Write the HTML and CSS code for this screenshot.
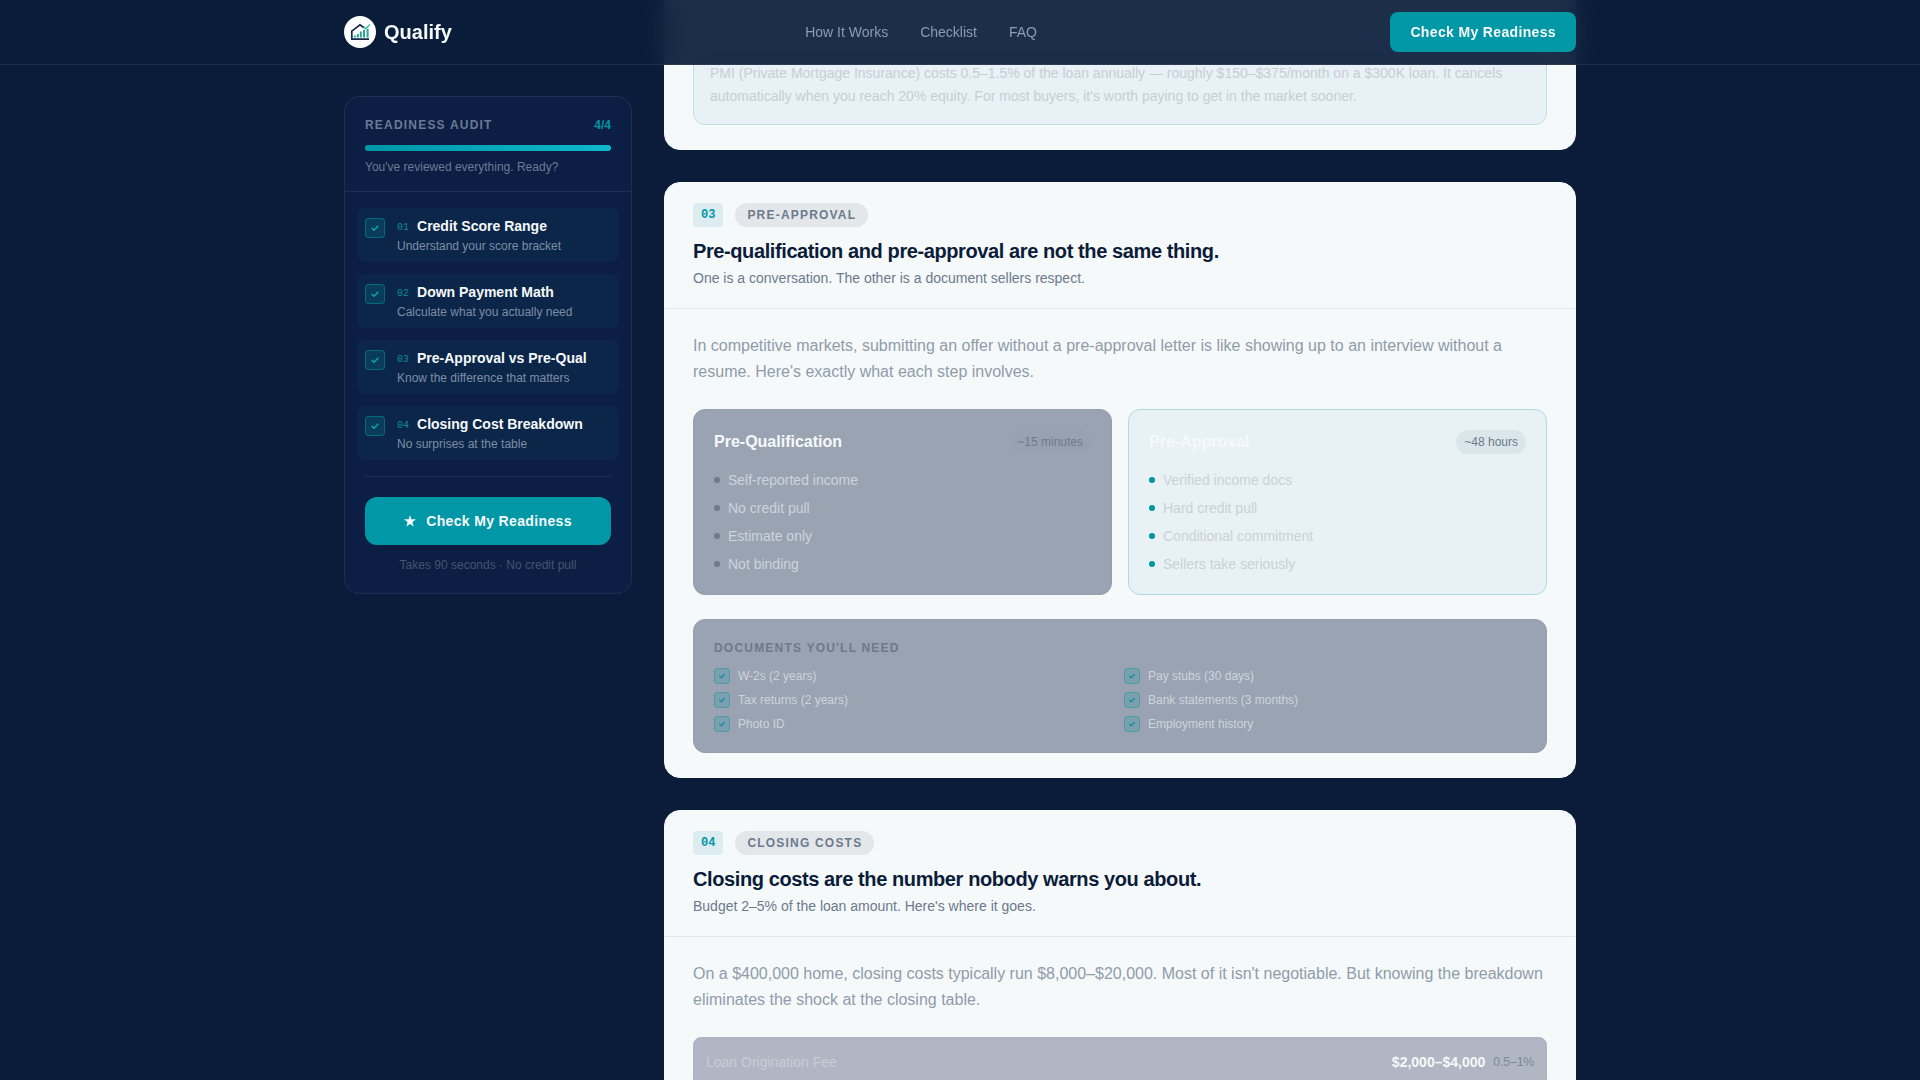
FILE: index.html
```html
<!DOCTYPE html>
<html lang="en">
<head>
    <meta charset="UTF-8">
    <meta name="viewport" content="width=device-width, initial-scale=1.0">
    <title>Qualify</title>
    <link rel="stylesheet" href="styles.css">
</head>
<body>
    <!-- Shared icons -->
    <svg class="sprite" aria-hidden="true">
        <symbol id="check" viewBox="0 0 12 12">
            <path d="M2.5 6.5 L4.8 8.7 L9.5 3.8" fill="none" stroke="currentColor" stroke-width="1.8" stroke-linecap="round" stroke-linejoin="round"/>
        </symbol>
    </svg>

    <header class="site-header">
        <div class="container header-inner">
            <a class="logo" href="#">
                <svg class="logo-mark" viewBox="0 0 32 32" aria-hidden="true">
                    <circle cx="16" cy="16" r="16" fill="#fff"/>
                    <path d="M20 11.8 L16 8.8 L7.8 15.2 V23.2 H25" fill="none" stroke="#14294a" stroke-width="1.7"/>
                    <path d="M10.8 19.6V21.6M13.8 18V21.6M16.8 15.5V21.6M20 14V21.6M23.6 12.8V21.6" stroke="#2aa58f" stroke-width="2"/>
                    <path d="M19.6 10.8 L21.6 12.8 L25.8 8.4" fill="none" stroke="#3dbd9c" stroke-width="1.4"/>
                </svg>
                <span class="logo-text">Qualify</span>
            </a>
            <nav class="nav">
                <a href="#how">How It Works</a>
                <a href="#checklist">Checklist</a>
                <a href="#faq">FAQ</a>
            </nav>
            <button class="button button-small" type="button">Check My Readiness</button>
        </div>
    </header>

    <div class="container layout">
        <aside class="sidebar">
            <div class="audit-head">
                <div class="audit-title">
                    <h2>Readiness Audit</h2>
                    <span class="audit-count">4/4</span>
                </div>
                <div class="progress"><div class="progress-bar" style="width: 100%"></div></div>
                <p>You've reviewed everything. Ready?</p>
            </div>

            <ol class="audit-list">
                <li>
                    <span class="tick"><svg><use href="#check"/></svg></span>
                    <div>
                        <h3><span class="step">01</span>Credit Score Range</h3>
                        <p>Understand your score bracket</p>
                    </div>
                </li>
                <li>
                    <span class="tick"><svg><use href="#check"/></svg></span>
                    <div>
                        <h3><span class="step">02</span>Down Payment Math</h3>
                        <p>Calculate what you actually need</p>
                    </div>
                </li>
                <li>
                    <span class="tick"><svg><use href="#check"/></svg></span>
                    <div>
                        <h3><span class="step">03</span>Pre-Approval vs Pre-Qual</h3>
                        <p>Know the difference that matters</p>
                    </div>
                </li>
                <li>
                    <span class="tick"><svg><use href="#check"/></svg></span>
                    <div>
                        <h3><span class="step">04</span>Closing Cost Breakdown</h3>
                        <p>No surprises at the table</p>
                    </div>
                </li>
            </ol>

            <div class="audit-foot">
                <button class="button button-large" type="button">
                    <svg class="star" viewBox="0 0 12 12" aria-hidden="true"><path d="M6 0 L7.4 4.2 L12 4.3 L8.4 7.1 L9.7 11.5 L6 8.9 L2.3 11.5 L3.6 7.1 L0 4.3 L4.6 4.2 Z" fill="currentColor"/></svg>
                    Check My Readiness
                </button>
                <p>Takes 90 seconds · No credit pull</p>
            </div>
        </aside>

        <main class="content" id="checklist">
            <section class="card card-continued">
                <div class="callout">
                    PMI (Private Mortgage Insurance) costs 0.5–1.5% of the loan annually — roughly $150–$375/month on a $300K loan. It cancels automatically when you reach 20% equity. For most buyers, it's worth paying to get in the market sooner.
                </div>
            </section>

            <section class="card">
                <div class="card-head">
                    <div class="card-tags">
                        <span class="number">03</span>
                        <span class="tag">Pre-Approval</span>
                    </div>
                    <h2>Pre-qualification and pre-approval are not the same thing.</h2>
                    <p>One is a conversation. The other is a document sellers respect.</p>
                </div>
                <div class="card-body">
                    <p class="intro">In competitive markets, submitting an offer without a pre-approval letter is like showing up to an interview without a resume. Here's exactly what each step involves.</p>

                    <div class="compare">
                        <div class="panel">
                            <div class="panel-head">
                                <h3>Pre-Qualification</h3>
                                <span class="time">~15 minutes</span>
                            </div>
                            <ul>
                                <li>Self-reported income</li>
                                <li>No credit pull</li>
                                <li>Estimate only</li>
                                <li>Not binding</li>
                            </ul>
                        </div>
                        <div class="panel panel-teal">
                            <div class="panel-head">
                                <h3>Pre-Approval</h3>
                                <span class="time">~48 hours</span>
                            </div>
                            <ul>
                                <li>Verified income docs</li>
                                <li>Hard credit pull</li>
                                <li>Conditional commitment</li>
                                <li>Sellers take seriously</li>
                            </ul>
                        </div>
                    </div>

                    <div class="documents">
                        <h3>Documents you'll need</h3>
                        <ul>
                            <li><span class="tick tick-small"><svg><use href="#check"/></svg></span>W-2s (2 years)</li>
                            <li><span class="tick tick-small"><svg><use href="#check"/></svg></span>Pay stubs (30 days)</li>
                            <li><span class="tick tick-small"><svg><use href="#check"/></svg></span>Tax returns (2 years)</li>
                            <li><span class="tick tick-small"><svg><use href="#check"/></svg></span>Bank statements (3 months)</li>
                            <li><span class="tick tick-small"><svg><use href="#check"/></svg></span>Photo ID</li>
                            <li><span class="tick tick-small"><svg><use href="#check"/></svg></span>Employment history</li>
                        </ul>
                    </div>
                </div>
            </section>

            <section class="card">
                <div class="card-head">
                    <div class="card-tags">
                        <span class="number">04</span>
                        <span class="tag">Closing Costs</span>
                    </div>
                    <h2>Closing costs are the number nobody warns you about.</h2>
                    <p>Budget 2–5% of the loan amount. Here's where it goes.</p>
                </div>
                <div class="card-body">
                    <p class="intro">On a $400,000 home, closing costs typically run $8,000–$20,000. Most of it isn't negotiable. But knowing the breakdown eliminates the shock at the closing table.</p>

                    <div class="cost">
                        <span class="cost-name">Loan Origination Fee</span>
                        <span class="cost-price">$2,000–$4,000</span>
                        <span class="cost-share">0.5–1%</span>
                    </div>
                </div>
            </section>
        </main>
    </div>
</body>
</html>
```
FILE: styles.css
```css
* {
    box-sizing: border-box;
    margin: 0;
    padding: 0;
}

body {
    height: 100vh;
    overflow: hidden;
    background-color: #0a1c39;
    color: #f6f9fa;
    font-family: "Liberation Sans", Arial, sans-serif;
    font-size: 14px;
    line-height: 20px;
}

ul, ol {
    list-style: none;
}

a {
    color: inherit;
    text-decoration: none;
}

.sprite {
    display: none;
}

.container {
    max-width: 1280px;
    margin: 0 auto;
    padding: 0 24px;
}

/* Header */
.site-header {
    position: fixed;
    top: 0;
    left: 0;
    right: 0;
    z-index: 10;
    background-color: rgba(10, 28, 57, 0.92);
    border-bottom: 1px solid rgba(255, 255, 255, 0.07);
    backdrop-filter: blur(12px);
}

.header-inner {
    display: flex;
    align-items: center;
    justify-content: space-between;
    height: 64px;
}

.logo {
    display: flex;
    align-items: center;
    gap: 8px;
}

.logo-mark {
    width: 32px;
    height: 32px;
}

.logo-text {
    font-size: 20px;
    font-weight: bold;
}

.nav {
    display: flex;
    gap: 32px;
    color: #8e9bb0;
}

.button {
    border: none;
    background-color: #0097a7;
    color: #f6f9fa;
    font-family: inherit;
    font-size: 14px;
    font-weight: bold;
    letter-spacing: 0.025em;
    cursor: pointer;
}

.button-small {
    height: 40px;
    padding: 0 20px;
    border-radius: 8px;
}

.button-large {
    display: flex;
    align-items: center;
    justify-content: center;
    gap: 10px;
    width: 100%;
    height: 48px;
    border-radius: 12px;
}

.star {
    width: 12px;
    height: 12px;
}

.layout {
    display: flex;
    align-items: flex-start;
    gap: 32px;
}

/* Sidebar */
.sidebar {
    flex: 0 0 288px;
    margin-top: 96px;
    border: 1px solid rgba(255, 255, 255, 0.07);
    border-radius: 16px;
    background-color: #0d1e44;
    font-size: 12px;
    line-height: 16px;
}

.audit-head {
    padding: 20px 20px 16px;
    border-bottom: 1px solid rgba(255, 255, 255, 0.07);
    color: #6b7a94;
}

.audit-title {
    display: flex;
    justify-content: space-between;
}

.audit-title h2 {
    font-size: 12px;
    letter-spacing: 0.1em;
    text-transform: uppercase;
}

.audit-count {
    color: #0097a7;
    font-weight: bold;
}

.progress {
    height: 6px;
    margin: 12px 0 8px;
    border-radius: 3px;
    background-color: rgba(255, 255, 255, 0.08);
}

.progress-bar {
    height: 100%;
    border-radius: 3px;
    background: linear-gradient(90deg, #0097a7, #0fb8cc);
}

.audit-list {
    display: grid;
    gap: 12px;
    padding: 16px 12px;
}

.audit-list li {
    display: flex;
    gap: 12px;
    padding: 8px;
    border-radius: 8px;
    background-color: rgba(0, 151, 140, 0.07);
}

.audit-list h3 {
    font-size: 14px;
    line-height: 20px;
}

.audit-list p {
    color: #7e8da6;
}

.step {
    margin-right: 8px;
    color: #0b8b94;
    font-family: "Liberation Mono", monospace;
    font-size: 10px;
    font-weight: normal;
    vertical-align: 1px;
}

.tick {
    display: flex;
    flex: none;
    align-items: center;
    justify-content: center;
    width: 20px;
    height: 20px;
    margin-top: 2px;
    border: 1px solid rgba(0, 151, 160, 0.5);
    border-radius: 4px;
    background-color: rgba(0, 151, 167, 0.2);
    color: #0fa3a8;
}

.tick svg {
    width: 10px;
    height: 10px;
}

.tick-small {
    width: 16px;
    height: 16px;
    margin-top: 0;
    border-color: rgba(0, 151, 160, 0.4);
    color: #0b8aa0;
}

.tick-small svg {
    width: 8px;
    height: 8px;
}

.audit-foot {
    margin: 0 20px;
    padding: 20px 0;
    border-top: 1px solid rgba(255, 255, 255, 0.07);
}

.audit-foot p {
    margin-top: 12px;
    color: #45536f;
    text-align: center;
}

/* Cards */
.content {
    display: grid;
    flex: 1;
    gap: 32px;
    min-width: 0;
}

.card {
    border: 1px solid #f6f9fa;
    border-radius: 16px;
    background-color: #f6f9fa;
}

/* Runs up under the fixed header */
.card-continued {
    margin-top: -80px;
    padding: 124px 28px 24px;
}

.callout {
    padding: 16px;
    border: 1px solid #bfe0e0;
    border-radius: 12px;
    background-color: #e8f1f5;
    color: #c5cfd3;
    line-height: 23px;
}

.card-head {
    padding: 20px 28px;
    border-bottom: 1px solid #e2e5ea;
}

.card-tags {
    display: flex;
    gap: 12px;
    font-size: 12px;
    font-weight: bold;
    line-height: 24px;
}

.number {
    padding: 0 8px;
    border-radius: 4px;
    background-color: #dcecf0;
    color: #0097a7;
    font-family: "Liberation Mono", monospace;
}

.tag {
    padding: 0 12px;
    border-radius: 12px;
    background-color: #e4e7ea;
    color: #6b7a8d;
    letter-spacing: 0.1em;
    text-transform: uppercase;
}

.card-head h2 {
    margin: 12px 0 5px;
    color: #0a1c39;
    font-size: 20px;
    line-height: 24px;
    letter-spacing: -0.02em;
}

.card-head p {
    color: #6b7a8d;
    line-height: 20px;
}

.card-body {
    display: grid;
    gap: 24px;
    padding: 24px 28px;
}

.intro {
    color: #8f9cab;
    font-size: 16px;
    line-height: 26px;
}

.compare {
    display: grid;
    grid-template-columns: 1fr 1fr;
    gap: 16px;
}

.panel,
.documents {
    padding: 20px;
    border: 1px solid #959eae;
    border-radius: 12px;
    background-color: #9aa3b2;
    color: #cdd3dc;
}

.panel-head {
    display: flex;
    align-items: center;
    justify-content: space-between;
    margin-bottom: 16px;
}

.panel-head h3 {
    color: #f6f9fa;
    font-size: 16px;
    line-height: 24px;
}

.time {
    padding: 0 8px;
    border-radius: 12px;
    background-color: #98a1b0;
    color: #6b7a8d;
    font-size: 12px;
    line-height: 24px;
}

.panel ul {
    display: grid;
    gap: 8px;
}

.panel li {
    display: flex;
    align-items: center;
    gap: 8px;
}

.panel li::before {
    content: "";
    width: 6px;
    height: 6px;
    border-radius: 50%;
    background-color: #6b7a8d;
}

.panel-teal {
    border-color: #b0dadb;
    background-color: #e8f1f5;
    color: #c8d2d6;
}

.panel-teal .time {
    background-color: #dae6e9;
}

.panel-teal li::before {
    background-color: #0097a0;
}

.documents {
    font-size: 12px;
    line-height: 16px;
}

.documents h3 {
    margin-bottom: 12px;
    color: #6b7a8d;
    font-size: 12px;
    letter-spacing: 0.1em;
    text-transform: uppercase;
}

.documents ul {
    display: grid;
    grid-template-columns: 1fr 1fr;
    gap: 8px;
}

.documents li {
    display: flex;
    gap: 8px;
}

/* Closing costs */
.cost {
    display: flex;
    align-items: center;
    gap: 8px;
    padding: 14px 12px;
    border: 1px solid #abb2c0;
    border-radius: 8px;
    background-color: #b0b6c3;
}

.cost-name {
    flex: 1;
    color: #c8cdd6;
}

.cost-price {
    font-weight: bold;
}

.cost-share {
    color: #7b8798;
    font-size: 12px;
}
```
